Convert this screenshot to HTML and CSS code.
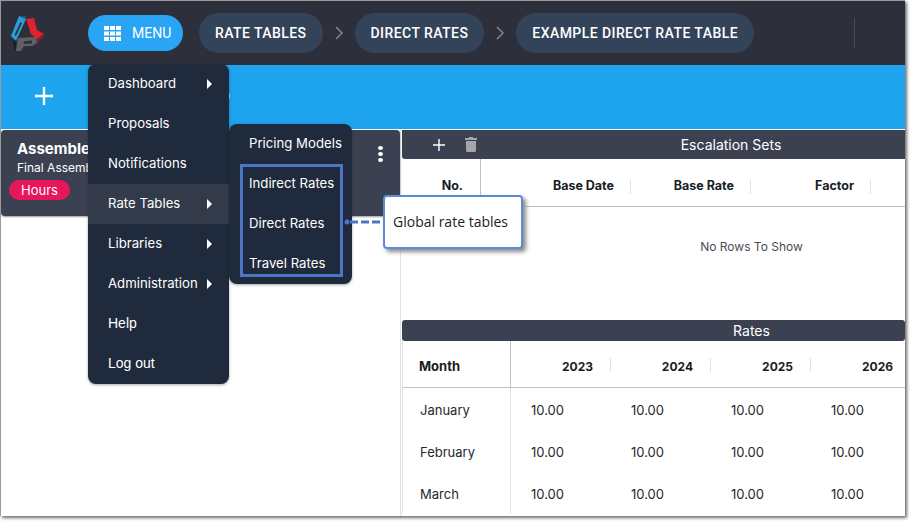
FILE: index.html
```html
<!DOCTYPE html>
<html lang="en">
<head>
<meta charset="utf-8">
<title>Direct Rates</title>
<link rel="stylesheet" href="styles.css">
</head>
<body>
<div class="window">
  <header class="topbar">
    <svg class="logo" viewBox="10 13 38 38" width="38" height="38" aria-hidden="true">
      <path d="M20 15 L27 18 L17 40 L12 35 Z M21.500 21 L15.500 34 L17 35 L23 22 Z" fill="#2f9bd8" fill-rule="evenodd"/>
      <path d="M20 15 L27 15.500 L27 18 Z" fill="#1d5f8e"/>
      <path d="M27 18 L35 17 L38 29 L45 33 L38 38 L32 33 Z" fill="#e0222f"/>
      <path d="M38 38 L45 33 L44 36 L38 42 Z" fill="#8c1c22"/>
      <path d="M19 37 L37 36 L38 42 L33 45 L25 45 L22 50 L17 50 Z M25 40.500 L24.500 43 L33 42.500 L33 39.500 Z" fill="#5d6064" fill-rule="evenodd"/>
      <path d="M14 38 L17 40 L17 50 L15 47 Z" fill="#1b1e24"/>
    </svg>
    <button class="menu-btn" type="button">
      <svg class="grid-icon" viewBox="0 0 17 15" width="17" height="15" aria-hidden="true">
        <path fill="#fff" d="M0 0h5v4H0zM6 0h5v4H6zM12 0h5v4h-5zM0 5.500h5v4H0zM6 5.500h5v4H6zM12 5.500h5v4h-5zM0 11h5v4H0zM6 11h5v4H6zM12 11h5v4h-5z"/>
      </svg>
      <span>MENU</span>
    </button>
    <nav class="crumbs">
      <a class="pill">RATE TABLES</a>
      <svg class="chev" viewBox="0 0 10 16" width="10" height="16" aria-hidden="true"><path d="M2 2l6 6-6 6" fill="none" stroke="#7d8695" stroke-width="1.500"/></svg>
      <a class="pill">DIRECT RATES</a>
      <svg class="chev" viewBox="0 0 10 16" width="10" height="16" aria-hidden="true"><path d="M2 2l6 6-6 6" fill="none" stroke="#7d8695" stroke-width="1.500"/></svg>
      <a class="pill">EXAMPLE DIRECT RATE TABLE</a>
    </nav>
    <div class="divider"></div>
  </header>

  <div class="toolbar">
    <svg class="plus-big" viewBox="0 0 18 18" width="18" height="18" aria-hidden="true"><path d="M9 0v18M0 9h18" stroke="#fff" stroke-width="2.400"/></svg>
    <svg class="ring" viewBox="0 0 20 20" width="20" height="20" aria-hidden="true"><circle cx="10" cy="10" r="9" fill="none" stroke="#fff" stroke-width="1.500"/></svg>
  </div>

  <main class="content">
    <section class="left">
      <div class="card">
        <div class="card-title">Assembled</div>
        <div class="card-sub">Final Assembly</div>
        <span class="badge">Hours</span>
        <div class="dots"><i></i><i></i><i></i></div>
      </div>
    </section>

    <section class="right">
      <div class="bar bar-esc">
        <svg class="bar-plus" viewBox="0 0 12 12" width="12" height="12" aria-hidden="true"><path d="M6 0v12M0 6h12" stroke="#fff" stroke-width="1.400"/></svg>
        <svg class="bar-trash" viewBox="0 0 12 15" width="12" height="15" aria-hidden="true"><path fill="#a3a5a9" d="M4 0h4v1h4v2H0V1h4zM1 4h10v9.500Q11 15 9.500 15h-7Q1 15 1 13.500z"/></svg>
        <span class="bar-title">Escalation Sets</span>
      </div>
      <div class="esc-head">
        <div class="hc hc-no">No.</div>
        <div class="hc sep">Base Date</div>
        <div class="hc sep">Base Rate</div>
        <div class="hc sep">Factor</div>
      </div>
      <div class="no-rows">No Rows To Show</div>

      <div class="bar bar-rates"><span class="bar-title">Rates</span></div>
      <div class="rates">
        <div class="r-head r-month">Month</div>
        <div class="r-head r-year sep">2023</div>
        <div class="r-head r-year sep">2024</div>
        <div class="r-head r-year sep">2025</div>
        <div class="r-head r-year sep">2026</div>

        <div class="r-cell r-name">January</div>
        <div class="r-cell">10.00</div><div class="r-cell">10.00</div><div class="r-cell">10.00</div><div class="r-cell">10.00</div>
        <div class="r-cell r-name">February</div>
        <div class="r-cell">10.00</div><div class="r-cell">10.00</div><div class="r-cell">10.00</div><div class="r-cell">10.00</div>
        <div class="r-cell r-name">March</div>
        <div class="r-cell">10.00</div><div class="r-cell">10.00</div><div class="r-cell">10.00</div><div class="r-cell">10.00</div>
      </div>
    </section>
  </main>

  <ul class="menu">
    <li>Dashboard<b class="tri"></b></li>
    <li>Proposals</li>
    <li>Notifications</li>
    <li class="active">Rate Tables<b class="tri"></b></li>
    <li>Libraries<b class="tri"></b></li>
    <li>Administration<b class="tri"></b></li>
    <li class="alt">Help</li>
    <li class="alt">Log out</li>
  </ul>

  <ul class="menu submenu">
    <li>Pricing Models</li>
    <li>Indirect Rates</li>
    <li>Direct Rates</li>
    <li>Travel Rates</li>
  </ul>

  <div class="highlight"></div>
  <svg class="connector" viewBox="0 0 40 8" width="40" height="8" aria-hidden="true">
    <circle cx="4" cy="4" r="2.500" fill="#4a76c4"/>
    <path d="M7 4H39" stroke="#4a76c4" stroke-width="3" stroke-dasharray="8 3"/>
  </svg>
  <div class="callout">Global rate tables</div>
</div>
</body>
</html>
```

FILE: styles.css
```css
* { box-sizing: border-box; }
html, body { margin: 0; padding: 0; background: #fff; }
body { width: 912px; height: 523px; overflow: hidden; font-family: "Inter", "Liberation Sans", sans-serif; }

.window {
  position: relative;
  width: 905px;
  height: 516px;
  background: #fff;
  border: 1px solid #9a9a9a;
  border-width: 1px 0 0 1px;
  box-shadow: 2px 2px 3px #6f6f6f;
  overflow: hidden;
}

.topbar {
  display: flex;
  align-items: center;
  height: 64px;
  background: #2d303b;
}
.logo { margin: 0 0 0 8px; flex: none; }
.menu-btn {
  display: flex;
  align-items: center;
  gap: 11px;
  width: 95px;
  height: 36px;
  margin-left: 41px;
  padding: 0 0 0 16px;
  border: 0;
  border-radius: 18px;
  background: #2aa5f5;
  color: #fff;
  font: 400 14px "Roboto", sans-serif;
}
.crumbs { display: flex; align-items: center; margin-left: 16px; }
.pill {
  display: block;
  height: 40px;
  padding: 0 16px;
  border-radius: 20px;
  background: #33445a;
  color: #fff;
  font: 500 14px/40px "Roboto", sans-serif;
  letter-spacing: .43px;
}
.chev { margin: 0 11px; flex: none; }
.divider { width: 1px; height: 30px; margin-left: 100px; background: #474b57; }

.toolbar {
  display: flex;
  align-items: center;
  height: 64px;
  padding: 0 0 2px 34px;
  background: #1ea3ef;
}
.ring { margin-left: 157px; }

.content { display: flex; height: 388px; }

.left { width: 400px; flex: none; border-right: 1px solid #dde0e8; }
.card {
  position: relative;
  height: 86px;
  margin-top: 1px;
  padding: 9px 16px;
  border-radius: 4px;
  background: #3c4152;
  color: #fff;
  box-shadow: 0 1px 2px #9a9a9a;
}
.card-title { font-size: 15px; font-weight: 700; line-height: 20px; white-space: nowrap; }
.card-sub { font-size: 12px; line-height: 18px; white-space: nowrap; }
.badge {
  display: inline-block;
  height: 20px;
  margin: 3px 0 0 -8px;
  padding: 0 12px;
  border-radius: 10px;
  background: #e8175d;
  font-size: 13px;
  line-height: 20px;
}
.dots {
  position: absolute;
  top: 16px;
  right: 17px;
  display: flex;
  flex-direction: column;
  gap: 2px;
}
.dots i { width: 5px; height: 4px; border-radius: 50%; background: #fff; }

.right { flex: 1; min-width: 0; padding: 1px 0 0 1px; }
.bar {
  position: relative;
  display: flex;
  align-items: center;
  background: #3c4152;
  color: #fff;
  border-radius: 0 0 0 3px;
}
.bar-esc { height: 29px; }
.bar-plus { margin-left: 31px; }
.bar-trash { margin-left: 20px; }
.bar-title {
  position: absolute;
  text-align: center;
  font-size: 14px;
  line-height: 20px;
}
.bar-esc .bar-title { left: 0; width: 658px; }
.bar-rates { height: 21px; border-radius: 3px; }
.bar-rates .bar-title { left: 0; width: 699px; }

.esc-head {
  display: grid;
  grid-template-columns: 79px 150px 120px 120px;
  align-items: center;
  height: 48px;
  border-bottom: 1px solid #bcc0ca;
}
.hc {
  position: relative;
  height: 100%;
  padding-right: 17px;
  text-align: right;
  font-size: 12.500px;
  font-weight: 700;
  line-height: 54px;
  color: #181d1f;
}
.hc-no { border-right: 1px solid #bcc0ca; }
.sep::after {
  content: "";
  position: absolute;
  top: 50%;
  right: 0;
  width: 1px;
  height: 14px;
  margin-top: -6px;
  background: #dde0e8;
}
.no-rows {
  height: 113px;
  padding: 31px 0 0 196px;
  text-align: center;
  font-size: 12px;
  line-height: 18px;
  color: #4a4d55;
}

.rates {
  display: grid;
  grid-template-columns: 108px repeat(4, 100px);
  grid-template-rows: 47px repeat(3, 42px);
  border-left: 1px solid #dde0e8;
}
.r-head {
  position: relative;
  border-bottom: 1px solid #bcc0ca;
  font-size: 13px;
  font-weight: 700;
  line-height: 51px;
  color: #181d1f;
}
.r-month { padding-left: 16px; border-right: 1px solid #bcc0ca; }
.r-year { padding-right: 18px; text-align: right; font-size: 12px; }
.r-cell {
  padding-left: 20px;
  font-size: 13px;
  line-height: 44px;
  color: #26282d;
}
.r-name { padding-left: 17px; border-right: 1px solid #dde0e8; }

.menu {
  position: absolute;
  top: 63px;
  left: 87px;
  width: 141px;
  margin: 0;
  padding: 0;
  list-style: none;
  background: #1f2a3c;
  border-radius: 8px;
  box-shadow: 0 1px 3px rgba(0,0,0,.35);
  color: #fff;
  font-size: 13.200px;
}
.menu li {
  display: flex;
  align-items: center;
  height: 40px;
  padding: 0 0 2px 20px;
  position: relative;
}
.menu li.active { background: #333b4b; }
.menu li.alt { font-family: "Liberation Sans", sans-serif; font-size: 14px; }
.tri {
  position: absolute;
  left: 119px;
  top: 15px;
  border-style: solid;
  border-width: 5px 0 5px 5px;
  border-color: transparent transparent transparent #fff;
}
.submenu { top: 123px; left: 228px; width: 123px; }

.highlight {
  position: absolute;
  top: 163px;
  left: 239px;
  width: 103px;
  height: 113px;
  border: 3px solid #4a76c4;
}
.connector { position: absolute; top: 217px; left: 342px; }
.callout {
  position: absolute;
  top: 194px;
  left: 382px;
  width: 140px;
  height: 54px;
  padding-left: 8px;
  border: 2px solid #5b8bd6;
  border-radius: 4px;
  background: #fff;
  box-shadow: 3px 3px 4px #8a8a8a;
  font: 14px/50px "Open Sans", sans-serif;
  color: #1c1c1c;
}
```
